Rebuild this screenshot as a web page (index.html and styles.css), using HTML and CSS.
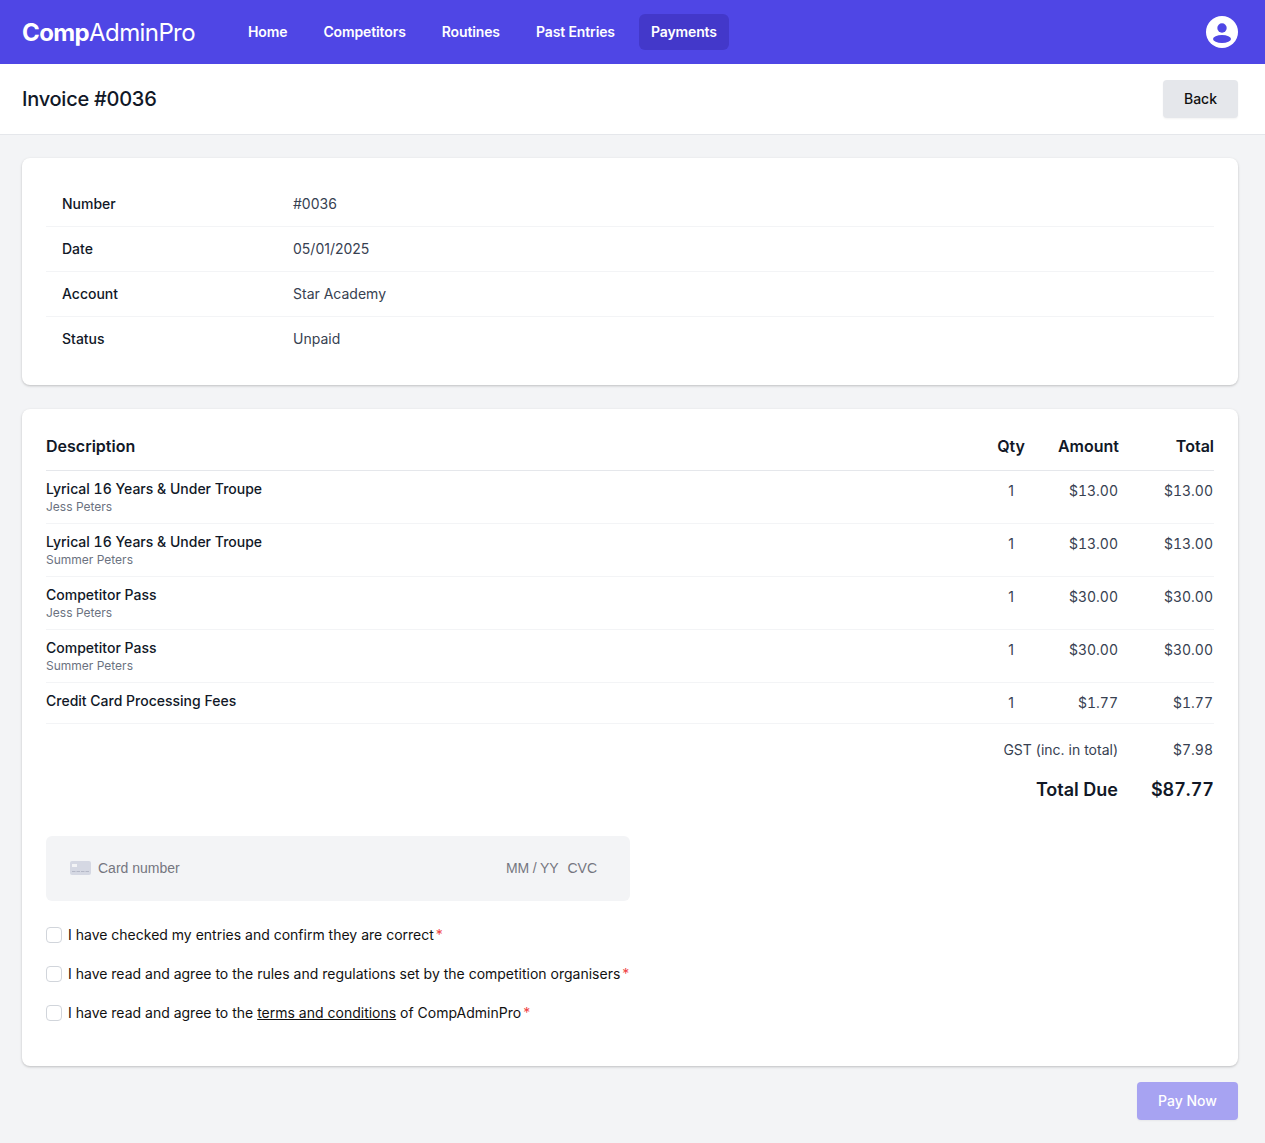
FILE: index.html
```html
<!DOCTYPE html>
<html lang="en">
<head>
    <meta charset="UTF-8">
    <meta name="viewport" content="width=device-width, initial-scale=1.0">
    <title>Invoice #0036</title>
    <link rel="stylesheet" href="styles.css">
</head>
<body>
    <nav class="navbar">
        <div class="logo"><strong>Comp</strong>AdminPro</div>
        <div class="nav-links">
            <a href="#">Home</a>
            <a href="#">Competitors</a>
            <a href="#">Routines</a>
            <a href="#">Past Entries</a>
            <a href="#" class="active">Payments</a>
        </div>
        <svg class="avatar" viewBox="0 0 32 32">
            <circle cx="16" cy="16" r="16" fill="#fff"/>
            <circle cx="16" cy="12" r="4.7" fill="#4f46e5"/>
            <ellipse cx="16" cy="23" rx="9" ry="4" fill="#4f46e5"/>
        </svg>
    </nav>

    <header class="page-header">
        <h1>Invoice #0036</h1>
        <button type="button" class="back-btn">Back</button>
    </header>

    <main class="content">
        <section class="card details">
            <div class="detail-row"><span class="detail-label">Number</span><span>#0036</span></div>
            <div class="detail-row"><span class="detail-label">Date</span><span>05/01/2025</span></div>
            <div class="detail-row"><span class="detail-label">Account</span><span>Star Academy</span></div>
            <div class="detail-row"><span class="detail-label">Status</span><span>Unpaid</span></div>
        </section>

        <section class="card invoice">
            <div class="line head">
                <div class="col-desc">Description</div>
                <div class="col-qty">Qty</div>
                <div class="col-amount">Amount</div>
                <div class="col-total">Total</div>
            </div>
            <div class="line item">
                <div class="col-desc"><div class="item-name">Lyrical 16 Years &amp; Under Troupe</div><div class="item-sub">Jess Peters</div></div>
                <div class="col-qty">1</div>
                <div class="col-amount">$13.00</div>
                <div class="col-total">$13.00</div>
            </div>
            <div class="line item">
                <div class="col-desc"><div class="item-name">Lyrical 16 Years &amp; Under Troupe</div><div class="item-sub">Summer Peters</div></div>
                <div class="col-qty">1</div>
                <div class="col-amount">$13.00</div>
                <div class="col-total">$13.00</div>
            </div>
            <div class="line item">
                <div class="col-desc"><div class="item-name">Competitor Pass</div><div class="item-sub">Jess Peters</div></div>
                <div class="col-qty">1</div>
                <div class="col-amount">$30.00</div>
                <div class="col-total">$30.00</div>
            </div>
            <div class="line item">
                <div class="col-desc"><div class="item-name">Competitor Pass</div><div class="item-sub">Summer Peters</div></div>
                <div class="col-qty">1</div>
                <div class="col-amount">$30.00</div>
                <div class="col-total">$30.00</div>
            </div>
            <div class="line item single">
                <div class="col-desc"><div class="item-name">Credit Card Processing Fees</div></div>
                <div class="col-qty">1</div>
                <div class="col-amount">$1.77</div>
                <div class="col-total">$1.77</div>
            </div>

            <div class="summary gst">
                <div class="summary-label">GST (inc. in total)</div>
                <div class="col-total">$7.98</div>
            </div>
            <div class="summary due">
                <div class="summary-label">Total Due</div>
                <div class="col-total">$87.77</div>
            </div>

            <div class="card-input">
                <svg class="card-icon" viewBox="0 0 21 14">
                    <rect width="21" height="14" rx="2" fill="#d5d8e3"/>
                    <rect x="2" y="3" width="5" height="3" fill="#f3f4f6"/>
                    <path d="M2 10.5h17" stroke="#b4b8c7" stroke-width="1" stroke-dasharray="3.5 1"/>
                </svg>
                <span class="card-number">Card number</span>
                <span class="card-expiry">MM / YY</span>
                <span class="card-cvc">CVC</span>
            </div>

            <label class="check"><input type="checkbox"><span>I have checked my entries and confirm they are correct<span class="req">*</span></span></label>
            <label class="check"><input type="checkbox"><span>I have read and agree to the rules and regulations set by the competition organisers<span class="req">*</span></span></label>
            <label class="check"><input type="checkbox"><span>I have read and agree to the <a href="#">terms and conditions</a> of CompAdminPro<span class="req">*</span></span></label>
        </section>

        <div class="actions">
            <button type="button" class="pay-btn">Pay Now</button>
        </div>
    </main>
</body>
</html>
```

FILE: styles.css
```css
* {
    margin: 0;
    padding: 0;
    box-sizing: border-box;
    font-family: Inter, "Liberation Sans", sans-serif;
}

body {
    background-color: #f3f4f6;
    color: #111827;
    font-size: 14px;
}

.navbar {
    background-color: #4f46e5;
    height: 64px;
    display: flex;
    align-items: center;
    padding: 0 27px 0 22px;
}

.logo {
    color: white;
    font-size: 24px;
    letter-spacing: -0.6px;
    width: 214px;
    font-weight: 400;
}

.logo strong {
    font-weight: 700;
}

.nav-links {
    display: flex;
    gap: 12px;
    flex: 1;
}

.nav-links a {
    color: white;
    font-size: 14px;
    font-weight: 600;
    letter-spacing: -0.12px;
    text-decoration: none;
    padding: 10px 12px;
    line-height: 16px;
    border-radius: 6px;
}

.nav-links a.active {
    background-color: #4338ca;
}

.avatar {
    width: 32px;
    height: 32px;
}

.page-header {
    background-color: white;
    height: 71px;
    display: flex;
    justify-content: space-between;
    align-items: center;
    padding: 0 27px 0 22px;
    border-bottom: 1px solid #e5e7eb;
}

.page-header h1 {
    font-size: 20px;
    font-weight: 500;
    letter-spacing: -0.25px;
}

button {
    border: none;
    border-radius: 4px;
    font-size: 14px;
    font-weight: 500;
    width: 75px;
    height: 38px;
    padding-bottom: 2px;
    box-shadow: 0 1px 2px rgba(0,0,0,0.05);
}

.back-btn {
    background-color: #e5e7eb;
    color: #111;
}

.content {
    padding: 23px 27px 23px 22px;
}

.card {
    background-color: white;
    border-radius: 8px;
    box-shadow: 0 1px 3px rgba(0,0,0,0.15), 0 1px 2px rgba(0,0,0,0.08);
    padding: 24px;
}

.details {
    padding-top: 24px;
    padding-bottom: 23px;
    margin-bottom: 24px;
}

.detail-row {
    display: flex;
    height: 45px;
    align-items: center;
    padding-left: 16px;
    padding-bottom: 1px;
    border-bottom: 1px solid #f3f4f6;
    color: #374151;
}

.detail-row:last-child {
    border-bottom-color: transparent;
}

.detail-label {
    width: 231px;
    font-weight: 500;
    color: #111827;
}

.invoice {
    padding-top: 18px;
    padding-bottom: 45px;
}

.line {
    display: flex;
    border-bottom: 1px solid #f3f4f6;
}

.line.head {
    font-size: 16px;
    font-weight: 600;
    height: 44px;
    padding-bottom: 6px;
    align-items: center;
    border-bottom-color: #e5e7eb;
}

.col-desc {
    flex: 1;
}

.col-qty {
    width: 40px;
    padding-left: 10px;
    text-align: center;
}

.col-amount {
    width: 93px;
    text-align: right;
}

.col-total {
    width: 95px;
    text-align: right;
}

.head .col-qty {
    width: 56px;
    padding-left: 0;
    text-align: right;
    margin-right: 1px;
}

.line.item {
    height: 53px;
    padding-top: 9px;
    color: #374151;
}

.line.item.single {
    height: 41px;
}

.line.item .col-qty,
.line.item .col-amount,
.line.item .col-total {
    padding-top: 2px;
    line-height: 17px;
}

.item .col-amount,
.item .col-total,
.summary .col-total {
    font-variant-numeric: tabular-nums;
}

.item .col-amount {
    padding-right: 1px;
}

.item .col-total,
.summary .col-total {
    padding-right: 1px;
}

.due .col-total {
    padding-right: 0;
}

.item-name {
    color: #111827;
    font-weight: 500;
    font-variant-numeric: tabular-nums;
    line-height: 17px;
}

.item-sub {
    color: #6b7280;
    font-size: 12px;
    line-height: 15px;
    margin-top: 2px;
}

.summary {
    display: flex;
    justify-content: flex-end;
}

.summary-label {
    text-align: right;
    padding-right: 1px;
}

.gst {
    color: #374151;
    margin-top: 17px;
    line-height: 17px;
}

.due {
    font-size: 18px;
    font-weight: 600;
    margin-top: 21px;
    line-height: 22px;
}

.card-input {
    background-color: #f3f4f6;
    border-radius: 6px;
    width: 584px;
    height: 65px;
    margin-top: 35px;
    margin-bottom: 25px;
    display: flex;
    align-items: center;
    padding: 0 33px 1px 24px;
    color: #757680;
}

.card-input span {
    font-family: "Liberation Sans", sans-serif;
}

.card-icon {
    width: 21px;
    height: 14px;
    margin-right: 7px;
}

.card-number {
    flex: 1;
}

.card-expiry {
    margin-right: 9px;
    letter-spacing: -0.15px;
}

.check {
    display: flex;
    align-items: center;
    gap: 6px;
    height: 17px;
    margin-bottom: 22px;
    color: #111;
}

.check:last-child {
    margin-bottom: 0;
}

.check input {
    appearance: none;
    width: 16px;
    height: 16px;
    background-color: white;
    border: 1px solid #d1d5db;
    border-radius: 4px;
}

.check a {
    color: #111;
}

.req {
    color: #ef4444;
    margin-left: 2px;
}

.actions {
    display: flex;
    justify-content: flex-end;
    margin-top: 16px;
}

.pay-btn {
    background-color: #a7a3f2;
    color: white;
    width: 101px;
}
```
